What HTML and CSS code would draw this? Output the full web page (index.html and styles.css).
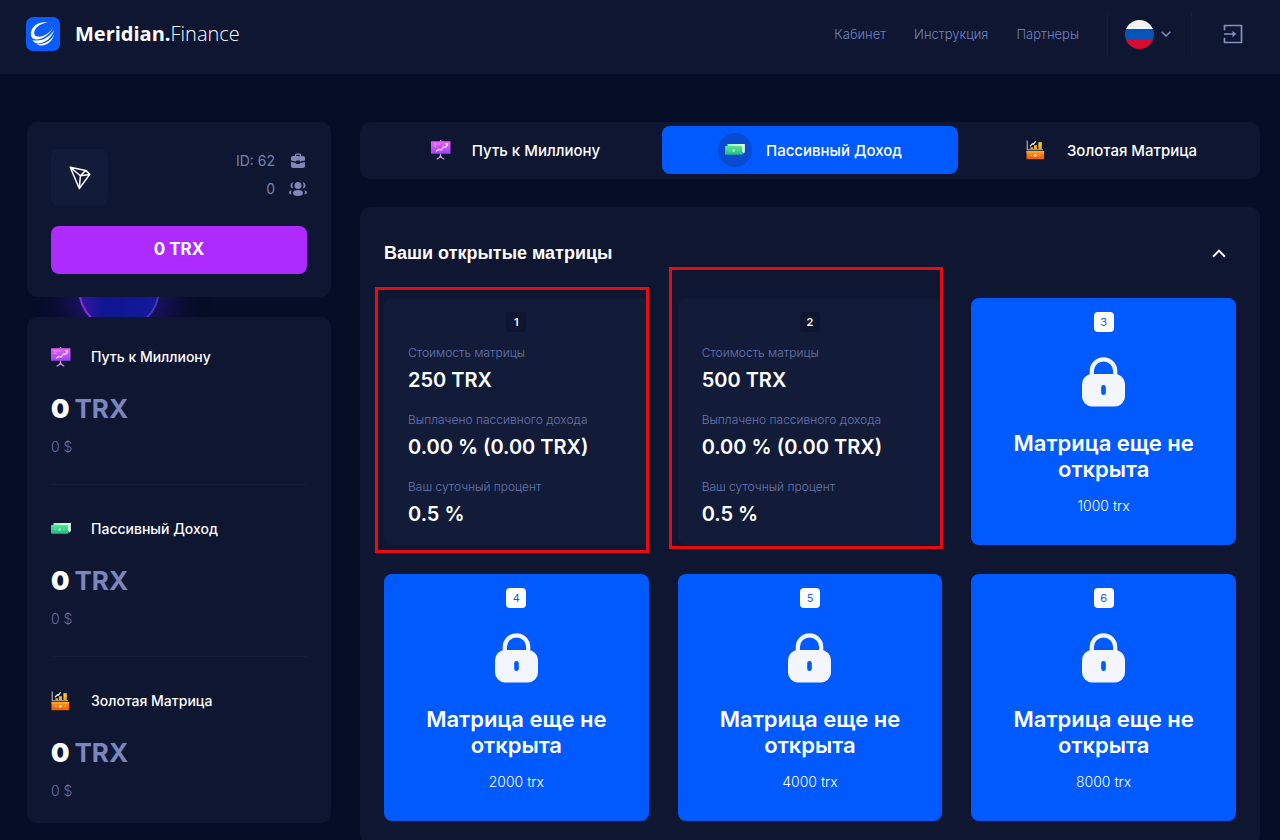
FILE: index.html
```
<!DOCTYPE html>
<html lang="ru">
<head>
<meta charset="utf-8">
<meta name="viewport" content="width=device-width, initial-scale=1">
<title>Meridian.Finance</title>
<link rel="stylesheet" href="styles.css">
</head>
<body>
<svg class="sprite" aria-hidden="true">
  <defs>
    <linearGradient id="g-violet" x1="0" y1="0" x2="0" y2="1"><stop offset="0" stop-color="#ea62f5"/><stop offset="1" stop-color="#9a45f6"/></linearGradient>
    <linearGradient id="g-green" x1="0" y1="0" x2="0" y2="1"><stop offset="0" stop-color="#55e58c"/><stop offset="1" stop-color="#20b98b"/></linearGradient>
    <linearGradient id="g-mint" x1="0" y1="0" x2="1" y2="0"><stop offset="0" stop-color="#8df2b4"/><stop offset="1" stop-color="#e9fff0"/></linearGradient>
    <linearGradient id="g-orange" x1="0" y1="0" x2="0" y2="1"><stop offset="0" stop-color="#ff9a1c"/><stop offset="1" stop-color="#ec5a08"/></linearGradient>
    <linearGradient id="g-gold" x1="0" y1="0" x2="0" y2="1"><stop offset="0" stop-color="#ffe01b"/><stop offset="1" stop-color="#f09a12"/></linearGradient>
  </defs>
  <symbol id="i-board" viewBox="0 0 20 20">
    <path d="M9.500 14v3M9.500 16c-1 2-2 2.600-3.300 2.900M9.500 16c1 2 2 2.600 3.300 2.900" fill="none" stroke="#d9a2e8" stroke-width="1.300" stroke-linecap="round"/>
    <path d="M9 0h1.200v1.500H9z" fill="#e9a5f0"/>
    <rect x="0" y="1.200" width="19.500" height="12.600" rx="0.600" fill="url(#g-violet)"/>
    <path d="M2.500 4h4M7.500 4h1.500M2.500 6.200h3" stroke="#f29bf8" stroke-width="0.900"/>
    <path d="M5 11.200l3-1.700 2 .6 2.600-3.100 1.700.6L16.200 4.800" fill="none" stroke="#ffd3ff" stroke-width="1.200"/>
    <path d="M14 3.400l3.300-.2-.5 3.200z" fill="#ffe1ff"/>
  </symbol>
  <symbol id="i-cash" viewBox="0 0 20 20">
    <path d="M2.600 4h17v8.500L17.500 14V5.500H2.600z" fill="url(#g-mint)"/>
    <path d="M2.600 4h17v7.800h-17z" fill="url(#g-mint)"/>
    <rect x="0" y="6" width="17.200" height="8.800" rx="0.800" fill="url(#g-green)"/>
    <circle cx="8.600" cy="10.400" r="1.500" fill="#8af0b3"/>
    <circle cx="4.400" cy="10.400" r="0.700" fill="#7ae5a8"/><circle cx="12.800" cy="10.400" r="0.700" fill="#7ae5a8"/>
  </symbol>
  <symbol id="i-gold" viewBox="0 0 20 20">
    <path d="M1.200.5v9.300h15.800" fill="none" stroke="#b9bdc9" stroke-width="1.100"/>
    <path d="M4.400 9.500V7.300h2.800v2.200zM8 9.500V5.200h3v4.300zM12.400 9.500V2.300h3.400v7.200z" fill="url(#g-gold)"/>
    <path d="M4 6.300l2.500-2.500 1 .4L9.800 1.200" fill="none" stroke="#e1e4ea" stroke-width="1.300"/>
    <rect x="0.500" y="11" width="17.600" height="8.300" rx="0.500" fill="url(#g-orange)"/>
    <path d="M.5 11h17.600v1.500H.5z" fill="#ffad29"/>
    <circle cx="9.300" cy="15.200" r="1.500" fill="#ffe08a"/><circle cx="5" cy="15.200" r=".8" fill="#ffb348"/><circle cx="13.600" cy="15.200" r=".8" fill="#ffb348"/>
  </symbol>
  <symbol id="i-lock" viewBox="0 0 43 50">
    <path d="M9.800 19V14a11.700 11.700 0 0 1 23.400 0v5" fill="none" stroke="#f3f5ff" stroke-width="4.200"/>
    <path fill-rule="evenodd" fill="#f3f5ff" d="M10 17h23a10 10 0 0 1 10 10v12.500A10 10 0 0 1 33 49.500H10a10 10 0 0 1-10-10V27a10 10 0 0 1 10-10zM21.500 28a2.300 2.300 0 0 0-2.300 2.300v5.400a2.300 2.300 0 0 0 4.600 0v-5.400a2.300 2.300 0 0 0-2.300-2.300z"/>
  </symbol>
</svg>

<header class="header">
  <a class="brand" href="#">
    <svg class="brand-mark" viewBox="0 0 34 34" aria-hidden="true">
      <rect width="34" height="34" rx="7" fill="#0a5cff"/>
      <path fill="#fff" d="M21.800 5.600C14 4 6.200 8.300 5 15.600c-.6 4 1.300 6.600 4.500 6.800 7.500.4 14.800-5.400 17.700-12.200C24 15.700 17.500 20.300 11.800 19.600c-3-.4-4.300-2.500-3.300-5.500 1.600-4.800 7.300-7.800 13.300-8.500z"/>
      <path fill="#fff" d="M6.600 22.900c8.800 2.300 17.600-3.200 21.600-10.200-2.100 8.400-10.800 15.200-18.900 13.400-1.200-.9-2-1.900-2.700-3.200z"/>
      <path fill="#fff" d="M10.300 27c8.100 1.100 14.700-3.300 17.900-9.400-1.800 7.400-10 14-17.900 9.400z"/>
    </svg>
    <span class="brand-name"><b>Meridian.</b>Finance</span>
  </a>
  <nav class="nav">
    <a href="#">Кабинет</a>
    <a href="#">Инструкция</a>
    <a href="#">Партнеры</a>
  </nav>
  <button class="lang" type="button" aria-label="Русский">
    <span class="flag"></span>
    <svg width="10" height="6" viewBox="0 0 10 6" fill="none" stroke="#8390c0" stroke-width="1.500" aria-hidden="true"><path d="M.7.700L5 5 9.300.700"/></svg>
  </button>
  <button class="exit" type="button" aria-label="Выход">
    <svg width="20" height="20" viewBox="0 0 20 20" fill="none" stroke="#8390c0" stroke-width="1.700" stroke-linejoin="round" aria-hidden="true"><path d="M1.500 6.200V1.500h17v17h-17v-4.700M1 10h11"/><path d="M9.500 6.800l3.700 3.200-3.700 3.200z" fill="#8390c0" stroke="none"/></svg>
  </button>
</header>

<div class="page">
  <aside class="side">
    <div class="orb" aria-hidden="true"></div>
    <section class="card account">
      <div class="account-top">
        <div class="coin">
          <svg width="22" height="24" viewBox="0 0 22 24" fill="none" stroke="#fff" stroke-width="1.500" stroke-linejoin="round" aria-hidden="true"><path d="M1.200 1.200l15.500 3.200 4.100 4L10.300 22.500zM1.200 1.200l10.200 8.600L10.300 22.500M11.400 9.800l5.300-5.400M11.400 9.800l9.400-1.400"/></svg>
        </div>
        <dl class="meta">
          <div><dd>ID: 62</dd><dt aria-label="Профиль">
            <svg width="18" height="16" viewBox="0 0 18 16" fill="#7d88b9" aria-hidden="true"><path fill-rule="evenodd" d="M6 3V1.800C6 1 6.700.5 7.500.5h3c.8 0 1.500.5 1.500 1.300V3h2c1.300 0 2 .8 2 2v2.500l-5 1c0-.7-.4-1-1-1H8c-.6 0-1 .3-1 1l-5-1V5c0-1.200.7-2 2-2zM7.300 3h3.400V1.800H7.300z"/><path d="M2 9l5 1c0 .7.400 1 1 1h2c.6 0 1-.3 1-1l5-1v4c0 1.300-.8 2-2 2H4c-1.200 0-2-.7-2-2z"/></svg>
          </dt></div>
          <div><dd>0</dd><dt aria-label="Партнеры">
            <svg width="18" height="16" viewBox="0 0 18 16" fill="#7d88b9" aria-hidden="true"><circle cx="9" cy="4.500" r="3.500"/><path d="M4.600 1.300a5 5 0 0 0-.2 6C2.600 7.500 1.500 6.300 1.500 4.500s1.300-3.300 3.100-3.200zM13.400 1.300a5 5 0 0 1 .2 6c1.800.2 2.900-1 2.900-2.800s-1.300-3.300-3.100-3.200z"/><ellipse cx="9" cy="12" rx="5" ry="2.900"/><path d="M2.800 9.300C1 9.700 0 10.700 0 11.600c0 1 .9 1.500 2.600 1.900-.8-1.400-.6-3 .2-4.200zM15.200 9.300c1.800.4 2.800 1.400 2.800 2.300 0 1-.9 1.500-2.600 1.900.8-1.400.6-3-.2-4.200z"/></svg>
          </dt></div>
        </dl>
      </div>
      <button class="balance" type="button">0 TRX</button>
    </section>

    <section class="card stats">
      <article class="stat">
        <h2><svg class="ico"><use href="#i-board"/></svg>Путь к Миллиону</h2>
        <p class="sum"><b>0</b><span>TRX</span></p>
        <p class="usd">0 $</p>
      </article>
      <article class="stat">
        <h2><svg class="ico"><use href="#i-cash"/></svg>Пассивный Доход</h2>
        <p class="sum"><b>0</b><span>TRX</span></p>
        <p class="usd">0 $</p>
      </article>
      <article class="stat">
        <h2><svg class="ico"><use href="#i-gold"/></svg>Золотая Матрица</h2>
        <p class="sum"><b>0</b><span>TRX</span></p>
        <p class="usd">0 $</p>
      </article>
    </section>
  </aside>

  <main class="main">
    <div class="tabs">
      <button class="tab" type="button"><span class="dot"><svg class="ico"><use href="#i-board"/></svg></span>Путь к Миллиону</button>
      <button class="tab active" type="button"><span class="dot"><svg class="ico"><use href="#i-cash"/></svg></span>Пассивный Доход</button>
      <button class="tab" type="button"><span class="dot"><svg class="ico"><use href="#i-gold"/></svg></span>Золотая Матрица</button>
    </div>

    <section class="panel">
      <div class="panel-head">
        <h1>Ваши открытые матрицы</h1>
        <button class="fold" type="button" aria-label="Свернуть">
          <svg width="14" height="9" viewBox="0 0 14 9" fill="none" stroke="#fff" stroke-width="2" aria-hidden="true"><path d="M1 7.800L7 1.600l6 6.200"/></svg>
        </button>
      </div>
      <div class="grid">
        <article class="matrix open">
          <span class="num">1</span>
          <dl class="facts">
            <div><dt>Стоимость матрицы</dt><dd>250 TRX</dd></div>
            <div><dt>Выплачено пассивного дохода</dt><dd>0.00 % (0.00 TRX)</dd></div>
            <div><dt>Ваш суточный процент</dt><dd>0.5 %</dd></div>
          </dl>
          <div class="mark mark-first"></div>
        </article>
        <article class="matrix open">
          <span class="num">2</span>
          <dl class="facts">
            <div><dt>Стоимость матрицы</dt><dd>500 TRX</dd></div>
            <div><dt>Выплачено пассивного дохода</dt><dd>0.00 % (0.00 TRX)</dd></div>
            <div><dt>Ваш суточный процент</dt><dd>0.5 %</dd></div>
          </dl>
          <div class="mark mark-second"></div>
        </article>
        <article class="matrix locked">
          <span class="num">3</span>
          <svg class="lock"><use href="#i-lock"/></svg>
          <h3>Матрица еще не открыта</h3>
          <p>1000 trx</p>
        </article>
        <article class="matrix locked">
          <span class="num">4</span>
          <svg class="lock"><use href="#i-lock"/></svg>
          <h3>Матрица еще не открыта</h3>
          <p>2000 trx</p>
        </article>
        <article class="matrix locked">
          <span class="num">5</span>
          <svg class="lock"><use href="#i-lock"/></svg>
          <h3>Матрица еще не открыта</h3>
          <p>4000 trx</p>
        </article>
        <article class="matrix locked">
          <span class="num">6</span>
          <svg class="lock"><use href="#i-lock"/></svg>
          <h3>Матрица еще не открыта</h3>
          <p>8000 trx</p>
        </article>
      </div>
    </section>
  </main>
</div>
</body>
</html>
```
FILE: styles.css
```
* { box-sizing: border-box; }
h1, h2, h3, p, dl, dd { margin: 0; }
button { border: 0; padding: 0; background: none; color: inherit; font: inherit; cursor: pointer; }
a { color: inherit; text-decoration: none; }

body {
  margin: 0;
  height: 100vh;
  overflow: auto;
  scrollbar-width: none;
  background: #060d27;
  color: #fff;
  font-family: Inter, "Noto Sans", sans-serif;
}
.sprite { position: absolute; width: 0; height: 0; }
.ico { width: 20px; height: 20px; flex: none; }

.header {
  display: flex;
  align-items: center;
  height: 74px;
  padding: 0 20px 6px 26px;
  background: #0e1632;
}
.brand { display: flex; align-items: center; gap: 15px; margin-right: auto; }
.brand-mark { width: 34px; height: 34px; }
.brand-name { font: 300 20px/28px "Open Sans", sans-serif; }
.brand-name b { font-weight: 700; }
.nav { display: flex; gap: 28px; margin-right: 28px; color: #7384bc; font-size: 13px; font-weight: 300; }
.lang {
  display: flex;
  align-items: center;
  gap: 7px;
  height: 44px;
  padding: 0 20px 0 17px;
  border: solid #141d3b;
  border-width: 0 1px;
}
.flag {
  width: 29px;
  height: 29px;
  border-radius: 50%;
  background: linear-gradient(#f3f3f3 31%, #0553b5 31% 68%, #d90b30 68%);
}
.exit { display: flex; margin: 0 17px 0 31px; }

.page { display: flex; align-items: flex-start; gap: 29px; padding: 48px 20px 0 27px; }
.card, .tabs, .panel { background: #0e1632; border-radius: 10px; }

.side { position: relative; flex: 0 0 304px; display: flex; flex-direction: column; gap: 20px; }
.card { position: relative; padding: 0 24px; }
.orb {
  position: absolute;
  top: 126px;
  left: 51px;
  width: 82px;
  height: 82px;
  border-radius: 50%;
  border: 2px solid #4636b8;
  border-left-color: #8a30d8;
  background: linear-gradient(90deg, #3a17a8, #0f1590 30%, #131a9c);
  box-shadow: 0 0 34px 12px rgba(50, 25, 165, 0.6);
}

.account { padding-top: 27px; padding-bottom: 23px; }
.account-top { display: flex; justify-content: space-between; margin-bottom: 20px; }
.coin { display: grid; place-items: center; width: 57px; height: 57px; border-radius: 8px; background: #121b38; }
.meta { color: #7382b5; font-size: 14px; line-height: 24px; }
.meta div { display: flex; justify-content: flex-end; align-items: center; gap: 14px; height: 24px; }
.meta div + div { margin-top: 4px; }
.meta dt { display: flex; }
.balance { width: 100%; height: 48px; padding-bottom: 2px; border-radius: 8px; background: #ae2bff; font-size: 17px; font-weight: 700; }

.stats { padding-top: 30px; padding-bottom: 22px; }
.stat + .stat { margin-top: 27px; padding-top: 34px; border-top: 1px solid #151e3b; }
.stat h2 { display: flex; align-items: center; gap: 20px; font-size: 14px; font-weight: 500; line-height: 20px; }
.sum { display: flex; gap: 5px; margin-top: 26px; font-size: 26px; font-weight: 700; line-height: 32px; }
.sum span { color: #7a87bd; }
.usd { margin-top: 12px; color: #6475ad; font-size: 14px; font-weight: 300; line-height: 20px; }

.main { flex: 1; min-width: 0; }
.tabs { display: grid; grid-template-columns: repeat(3, 1fr); gap: 2px; padding: 4px 4px 5px; margin-bottom: 28px; }
.tab {
  display: flex;
  align-items: center;
  justify-content: center;
  gap: 14px;
  height: 48px;
  border-radius: 8px;
  font-size: 15px;
  font-weight: 500;
}
.dot { display: grid; place-items: center; width: 34px; height: 34px; border-radius: 50%; }
.tab.active { background: #005aff; }
.active .dot { background: #084bd0; }

.panel { padding: 32px 24px 24px; }
.panel-head { display: flex; align-items: center; justify-content: space-between; margin-bottom: 31px; padding-right: 10px; }
.panel-head h1 { font: 700 18px/28px "Liberation Sans", Arial, sans-serif; }
.fold { display: flex; }

.grid { display: grid; grid-template-columns: repeat(3, 1fr); gap: 29px; }
.matrix {
  position: relative;
  display: flex;
  flex-direction: column;
  align-items: center;
  min-height: 247px;
  padding: 14px 24px 18px;
  border-radius: 8px;
}
.open { background: #121b38; }
.locked { background: #005aff; text-align: center; }
.num { width: 20px; height: 20px; border-radius: 4px; font-size: 11px; line-height: 20px; text-align: center; }
.open .num { background: #0d1530; font-weight: 600; }
.locked .num { background: #fff; color: #2452e0; }

.facts { align-self: stretch; display: grid; gap: 19px; margin-top: 13px; white-space: nowrap; }
.facts dt { color: #6677b0; font-size: 12px; font-weight: 300; line-height: 16px; }
.facts dd { margin-top: 6px; font-size: 20px; font-weight: 600; line-height: 26px; }

.lock { width: 43px; height: 50px; margin-top: 25px; }
.locked h3 { margin-top: 23px; font-size: 22px; font-weight: 600; line-height: 26px; }
.locked p { margin-top: 14px; font-size: 14px; font-weight: 300; line-height: 20px; }

/* red outlines drawn over the first two matrices */
.mark { position: absolute; border: 3px solid #e80b12; pointer-events: none; }
.mark-first { inset: -11px 0 -8px -9px; }
.mark-second { inset: -31px -1px -4px -9px; }

@media (max-width: 900px) {
  .page { flex-direction: column; }
  .side, .main { flex: none; width: 100%; }
  .grid { grid-template-columns: 1fr; }
}
```
